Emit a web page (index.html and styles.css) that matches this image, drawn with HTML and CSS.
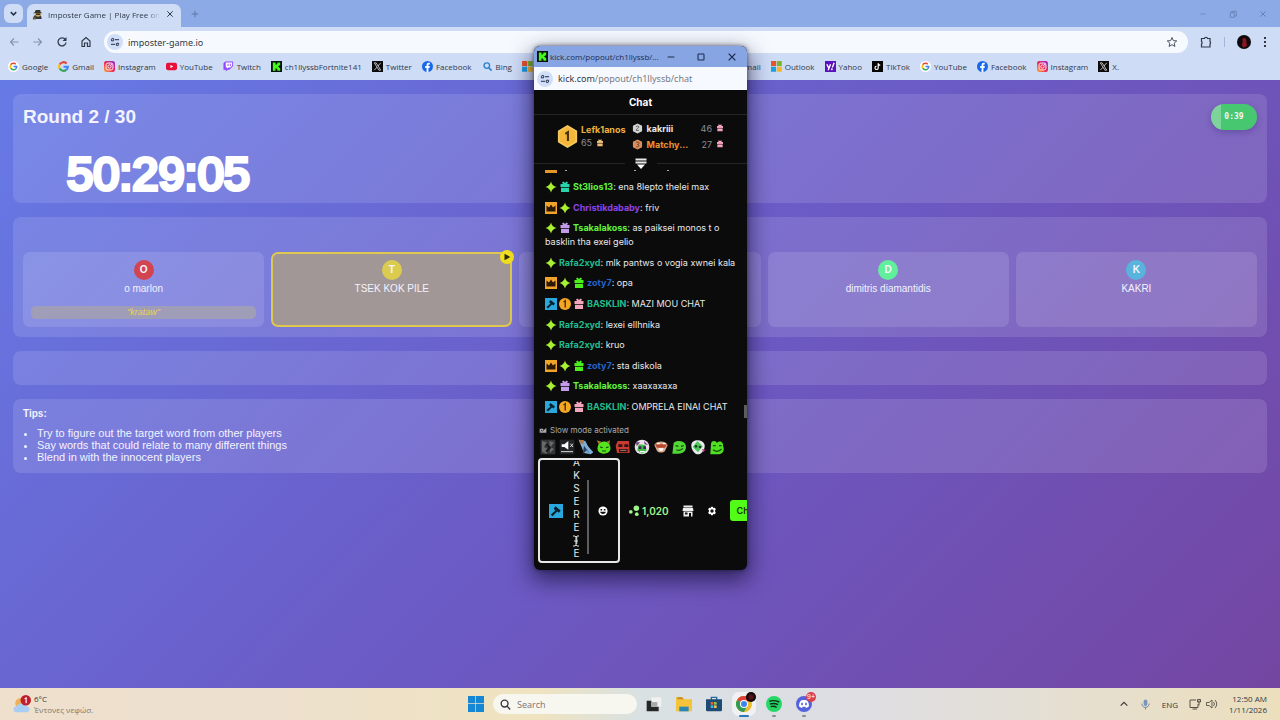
FILE: index.html
```
<!DOCTYPE html>
<html lang="en">
<head>
	<meta charset="utf-8">
	<title>Imposter Game | Play Free online</title>
	<link rel="stylesheet" href="styles.css">
</head>
<body>
	<svg class="defs" aria-hidden="true">
		<symbol id="google" viewBox="0 0 24 24"><circle cx="12" cy="12" r="12" fill="#fff"/><g fill="none" stroke-width="3.4"><path d="M17 7A7 7 0 0 0 6 8.400" stroke="#ea4335"/><path d="M6 8.400A7 7 0 0 0 6 15.600" stroke="#fbbc05"/><path d="M6 15.600A7 7 0 0 0 16.500 17.500" stroke="#34a853"/><path d="M12 12h7a7 7 0 0 1-2.500 5.500" stroke="#4285f4"/></g></symbol>
		<symbol id="gmail" viewBox="0 0 24 24"><g fill="none" stroke-width="4.6"><path d="M19 5.500A9.500 9.500 0 0 0 3.700 7.500" stroke="#ea4335"/><path d="M3.700 7.500a9.500 9.500 0 0 0 0 9" stroke="#fbbc05"/><path d="M3.700 16.500A9.500 9.500 0 0 0 18 19.500" stroke="#34a853"/><path d="M12 12.500h9.500a9.500 9.500 0 0 1-3.500 7" stroke="#4285f4"/></g></symbol>
		<symbol id="instagram" viewBox="0 0 24 24"><rect width="24" height="24" rx="5" fill="url(#insta)"/><g fill="none" stroke="#fff" stroke-width="2"><rect x="4.500" y="4.500" width="15" height="15" rx="4"/><circle cx="12" cy="12" r="3.600"/></g><circle cx="16.500" cy="7.500" r="1.200" fill="#fff"/></symbol>
		<linearGradient id="insta" x1="0" y1="1" x2="1" y2="0"><stop offset="0" stop-color="#fdb13c"/><stop offset=".45" stop-color="#f0284e"/><stop offset="1" stop-color="#9327e0"/></linearGradient>
		<symbol id="youtube" viewBox="0 0 24 24"><rect x="0" y="4" width="24" height="16" rx="4" fill="#e8103a"/><path d="M9.500 8.500v7l6.500-3.500z" fill="#fff"/></symbol>
		<symbol id="twitch" viewBox="0 0 24 24"><path d="M5 1 1 5v14h5v4l4-4h4l8-8V1z" fill="#9146ff"/><path d="M6 3h14v7l-4 4h-4l-3 3v-3H6z" fill="#fff"/><path d="M11 6v5M16 6v5" stroke="#9146ff" stroke-width="2"/></symbol>
		<symbol id="kick" viewBox="0 0 24 24"><rect width="24" height="24" fill="#06130a"/><path d="M4 3h6v5h2V6h2V3h6v6h-2v2h-2v2h2v2h2v6h-6v-3h-2v-2h-2v5H4z" fill="#42f81c"/></symbol>
		<symbol id="x" viewBox="0 0 24 24"><rect width="24" height="24" fill="#0b0b0d"/><path d="M5 4h4l10 16h-4zM19 4l-6 7M11 13.500 5 20" fill="none" stroke="#d8d8d8" stroke-width="1.800"/></symbol>
		<symbol id="facebook" viewBox="0 0 24 24"><circle cx="12" cy="12" r="12" fill="#1769e8"/><path d="M10 24v-9H7v-4h3V9c0-3.500 2-5 4.500-5H17v3.500h-1.500C14 7.500 14 8.300 14 9.200V11h3l-.5 4H14v9z" fill="#fff"/></symbol>
		<symbol id="bing" viewBox="0 0 24 24"><circle cx="10.500" cy="10" r="6" fill="none" stroke="#2b83cf" stroke-width="3"/><path d="m15 15 6 6" stroke="#2b83cf" stroke-width="3.500"/></symbol>
		<symbol id="microsoft" viewBox="0 0 24 24"><path fill="#e8542f" d="M0 0h11v11H0z"/><path fill="#7db32b" d="M12.500 0h11v11h-11z"/><path fill="#1d9fe0" d="M0 12.500h11v11H0z"/><path fill="#f5b52a" d="M12.500 12.500h11v11h-11z"/></symbol>
		<symbol id="yahoo" viewBox="0 0 24 24"><rect width="24" height="24" fill="#5b11bd"/><path d="m4 7 4 8M12 7 7 20M16 14l4-10" stroke="#fff" stroke-width="3"/><circle cx="15" cy="18" r="2" fill="#fff"/></symbol>
		<symbol id="tiktok" viewBox="0 0 24 24"><rect width="24" height="24" fill="#050505"/><path d="M13.500 5v10a3.500 3.500 0 1 1-3.500-3.500M13.500 5c.5 3 2 4 4.500 4.200" fill="none" stroke="#fff" stroke-width="2.600"/></symbol>
		<symbol id="tune" viewBox="0 0 24 24"><g fill="none" stroke="#44526d" stroke-width="3"><circle cx="6" cy="6.500" r="3"/><path d="M12 6.500h10M2 17.500h10"/><circle cx="18" cy="17.500" r="3"/></g></symbol>
		<symbol id="close" viewBox="0 0 12 12"><path d="m2 2 8 8M10 2l-8 8" fill="none" stroke="currentColor" stroke-width="1.500"/></symbol>
		<symbol id="star" viewBox="0 0 24 24"><path d="M12 1c1.500 7 5 9.500 11 11-6 1.500-9.500 5-11 11-1.500-6-5-9.500-11-11C7 10.500 10.500 7 12 1z" fill="#a8f032"/><path d="m12 5 7 7-7 7-7-7z" fill="#a8f032"/></symbol>
		<symbol id="gift" viewBox="0 0 24 24"><path d="M3 6h5L6 3l3-2 3 3 3-3 3 2-2 3h5v6H3zM4 13h16v9H4z" fill="currentColor"/><path d="M4 13h16" stroke="#0b0b0c" stroke-width="1"/></symbol>
		<symbol id="crown" viewBox="0 0 24 24"><rect width="24" height="24" fill="#f2a42a"/><path d="m3 7 5 4 4-6 4 6 5-4v12H3z" fill="#2b1804"/></symbol>
		<symbol id="hammer" viewBox="0 0 24 24"><rect width="24" height="24" fill="#2aa7dc"/><path d="m11 4 9 7-3 4-3-2-8 8-3-3 8-7-3-3z" fill="#08202e"/></symbol>
		<symbol id="coin" viewBox="0 0 24 24"><circle cx="12" cy="12" r="12" fill="#f3a724"/><path d="m9 8 3.500-2.500V19" fill="none" stroke="#5b3505" stroke-width="3"/></symbol>
	</svg>

	<header class="browser">
		<div class="tabstrip">
			<button class="tab-search" aria-label="Search tabs"><svg viewBox="0 0 12 12"><path d="m3 4.500 3 3 3-3" fill="none" stroke="#26324a" stroke-width="1.600"/></svg></button>
			<div class="tab">
				<svg class="favicon" viewBox="0 0 24 24"><path d="M3 22c0-7 3-10 9-10s9 3 9 10z" fill="#30363b"/><circle cx="13" cy="11" r="6" fill="#d5a64a"/><path d="M2 9h21l-4-2-1-5H8L6 7z" fill="#343427"/><path d="M9 10h9v3H9z" fill="#262b2e"/><path d="M2 17h6v6H2z" fill="#795e30"/></svg>
				<span class="tab-title">Imposter Game | Play Free onlin</span>
				<button class="plain" aria-label="Close tab"><svg class="i8"><use href="#close"/></svg></button>
			</div>
			<button class="plain new-tab" aria-label="New tab"><svg class="i8" viewBox="0 0 12 12"><path d="M6 1v10M1 6h10" stroke="#58719f" stroke-width="1.300"/></svg></button>
			<div class="window-buttons">
				<button class="plain" aria-label="Minimize"><svg class="i8" viewBox="0 0 12 12"><path d="M2 6h8" stroke="currentColor"/></svg></button>
				<button class="plain" aria-label="Restore"><svg class="i8" viewBox="0 0 12 12"><path d="M2 4h6v7H2zM4 4V2h7v7H8" fill="none" stroke="currentColor" stroke-width="1.300"/></svg></button>
				<button class="plain" aria-label="Close"><svg class="i8"><use href="#close"/></svg></button>
			</div>
		</div>
		<div class="toolbar">
			<div class="nav-buttons">
				<button class="plain faded" aria-label="Back"><svg viewBox="0 0 24 24"><path d="M21 12H5m7-7-7 7 7 7" fill="none" stroke="currentColor" stroke-width="2.200"/></svg></button>
				<button class="plain faded" aria-label="Forward"><svg viewBox="0 0 24 24"><path d="M3 12h16m-7-7 7 7-7 7" fill="none" stroke="currentColor" stroke-width="2.200"/></svg></button>
				<button class="plain" aria-label="Reload"><svg viewBox="0 0 24 24"><path d="M18.500 7a8 8 0 1 0 1.500 6" fill="none" stroke="currentColor" stroke-width="2.600"/><path d="M21 2v8h-8z" fill="currentColor"/></svg></button>
				<button class="plain" aria-label="Home"><svg viewBox="0 0 24 24"><path d="M4 10v11h5v-7h6v7h5V10l-8-7z" fill="none" stroke="currentColor" stroke-width="2.400"/></svg></button>
			</div>
			<div class="omnibox">
				<svg class="site-info"><use href="#tune"/></svg>
				<input class="address" type="text" aria-label="Address" value="imposter-game.io">
				<button class="plain" aria-label="Bookmark"><svg viewBox="0 0 24 24"><path d="m12 3 2.700 6.200 6.800.6-5.100 4.500 1.500 6.600-5.900-3.500-5.900 3.500 1.500-6.600-5.100-4.500 6.800-.6z" fill="none" stroke="#4b5360" stroke-width="2"/></svg></button>
			</div>
			<div class="tools">
				<button class="plain" aria-label="Extensions"><svg viewBox="0 0 24 24"><path d="M3 5h6a3 2.500 0 0 1 6 0h5v6a2.500 3 0 0 1 0 5v6H3v-6a3 3 0 0 0 0-5z" fill="none" stroke="currentColor" stroke-width="2.400"/></svg></button>
				<span class="divider"></span>
				<button class="plain" aria-label="Profile"><svg class="i14" viewBox="0 0 24 24"><circle cx="12" cy="12" r="12" fill="#0e090d"/><path d="M9 7c3-4 8-1 7 4l1 8-6 3-3-5 2-5z" fill="#8c1520"/></svg></button>
				<button class="plain" aria-label="Menu"><svg class="dots" viewBox="0 0 4 12"><circle cx="2" cy="2" r="1"/><circle cx="2" cy="6" r="1"/><circle cx="2" cy="10" r="1"/></svg></button>
			</div>
		</div>
		<nav class="bookmarks">
			<div class="bookmark-group">
				<a href="#"><svg><use href="#google"/></svg>Google</a>
				<a href="#"><svg><use href="#gmail"/></svg>Gmail</a>
				<a href="#"><svg><use href="#instagram"/></svg>Instagram</a>
				<a href="#"><svg><use href="#youtube"/></svg>YouTube</a>
				<a href="#"><svg><use href="#twitch"/></svg>Twitch</a>
				<a href="#"><svg><use href="#kick"/></svg>ch1llyssbFortnite141</a>
				<a href="#"><svg><use href="#x"/></svg>Twitter</a>
				<a href="#"><svg><use href="#facebook"/></svg>Facebook</a>
				<a href="#"><svg><use href="#bing"/></svg>Bing</a>
				<a href="#" aria-label="Microsoft"><svg><use href="#microsoft"/></svg></a>
			</div>
			<div class="bookmark-group">
				<a href="#">Gmail</a>
				<a href="#"><svg><use href="#microsoft"/></svg>Outlook</a>
				<a href="#"><svg><use href="#yahoo"/></svg>Yahoo</a>
				<a href="#"><svg><use href="#tiktok"/></svg>TikTok</a>
				<a href="#"><svg><use href="#google"/></svg>YouTube</a>
				<a href="#"><svg><use href="#facebook"/></svg>Facebook</a>
				<a href="#"><svg><use href="#instagram"/></svg>Instagram</a>
				<a href="#"><svg><use href="#x"/></svg>X.</a>
			</div>
		</nav>
	</header>

	<main class="game">
		<section class="panel round">
			<div>
				<h1>Round 2 / 30</h1>
				<div class="stream-clock">50:29:05</div>
			</div>
			<div class="timer">0:39</div>
		</section>
		<section class="panel players">
			<article class="player">
				<span class="avatar red">O</span>
				<span>o marlon</span>
				<span class="word">"krataw"</span>
			</article>
			<article class="player current">
				<span class="avatar yellow">T</span>
				<span>TSEK KOK PILE</span>
				<span class="turn"><svg viewBox="0 0 12 12"><path d="m3 2 7 4-7 4z" fill="#29280c"/></svg></span>
			</article>
			<article class="player"></article>
			<article class="player">
				<span class="avatar green">D</span>
				<span>dimitris diamantidis</span>
			</article>
			<article class="player">
				<span class="avatar blue">K</span>
				<span>KAKRI</span>
			</article>
		</section>
		<section class="panel status"></section>
		<section class="panel tips">
			<h2>Tips:</h2>
			<ul>
				<li>Try to figure out the target word from other players</li>
				<li>Say words that could relate to many different things</li>
				<li>Blend in with the innocent players</li>
			</ul>
		</section>
	</main>

	<!-- chat popout -->
	<aside class="popout">
		<div class="popout-title">
			<svg class="i11"><use href="#kick"/></svg>
			<span class="popout-name">kick.com/popout/ch1llyssb/...</span>
			<button class="plain" aria-label="Minimize"><svg class="i8" viewBox="0 0 12 12"><path d="M1 6h10" stroke="currentColor" stroke-width="1.500"/></svg></button>
			<button class="plain" aria-label="Maximize"><svg class="i8" viewBox="0 0 12 12"><rect x="1.500" y="1.500" width="9" height="9" rx="1" fill="none" stroke="currentColor" stroke-width="1.600"/></svg></button>
			<button class="plain" aria-label="Close"><svg class="i10"><use href="#close"/></svg></button>
		</div>
		<div class="popout-address">
			<svg class="site-info"><use href="#tune"/></svg>
			<div><span class="host">kick.com</span>/popout/ch1llyssb/chat</div>
		</div>
		<h2 class="chat-title">Chat</h2>
		<div class="leaders">
			<div class="leader-first">
				<svg class="medal" viewBox="0 0 24 26"><path d="m12 1 10 6v12l-10 6-10-6V7z" fill="#f4b73a" stroke="#f6c75c" stroke-width="2" stroke-linejoin="round"/><path d="m9.500 10 3-2v10" fill="none" stroke="#4b3209" stroke-width="2.400"/></svg>
				<div>
					<b class="gold">Lefk1anos</b>
					<div class="count">65 <svg class="i8 tan"><use href="#gift"/></svg></div>
				</div>
			</div>
			<div class="leader-rest">
				<div class="leader"><svg class="i11" viewBox="0 0 24 24"><path d="m12 1 10 5v12l-10 5-10-5V6z" fill="#d2d3d5"/><path d="M9 9c0-3 6-3 6 0 0 2-6 3-6 7h6" fill="none" stroke="#555" stroke-width="2"/></svg><b>kakriii</b><span class="count">46</span><svg class="i8 pink"><use href="#gift"/></svg></div>
				<div class="leader"><svg class="i11" viewBox="0 0 24 24"><path d="m12 1 10 5v12l-10 5-10-5V6z" fill="#d98f5d"/><path d="M9 7h5c2 0 2 5-2 5 4 0 4 5 0 5H9" fill="none" stroke="#70391d" stroke-width="2"/></svg><b class="orange">Matchy...</b><span class="count">27</span><svg class="i8 pink"><use href="#gift"/></svg></div>
			</div>
		</div>
		<div class="collapse"><button class="plain" aria-label="Collapse"><svg class="i12" viewBox="0 0 24 24"><path d="M1 3h22M1 9h22" stroke="#e8e8e8" stroke-width="4"/><path d="M4 13h16l-8 9z" fill="#fff"/></svg></button></div>
		<div class="cut-row"><svg viewBox="0 0 130 3"><path d="M0 0h12v3H0z" fill="#e79628"/><path d="M20 0h2v1h-2zM89 0h2v1h-2zM122 0h2v1h-2z" fill="#aaa"/></svg></div>
		<div class="messages">
			<p><svg><use href="#star"/></svg><svg class="teal"><use href="#gift"/></svg><b class="n-green">St3lios13</b>: ena 8lepto thelei max</p>
			<p><svg><use href="#crown"/></svg><svg><use href="#star"/></svg><b class="n-purple">Christikdababy</b>: friv</p>
			<p><svg><use href="#star"/></svg><svg class="lilac"><use href="#gift"/></svg><b class="n-green">Tsakalakoss</b>: as paiksei monos t o basklin tha exei gelio</p>
			<p><svg><use href="#star"/></svg><b class="n-teal">Rafa2xyd</b>: mlk pantws o vogia xwnei kala</p>
			<p><svg><use href="#crown"/></svg><svg><use href="#star"/></svg><svg class="lime"><use href="#gift"/></svg><b class="n-blue">zoty7</b>: opa</p>
			<p><svg><use href="#hammer"/></svg><svg><use href="#coin"/></svg><svg class="pink"><use href="#gift"/></svg><b class="n-teal">BASKLIN</b>: MAZI MOU CHAT</p>
			<p><svg><use href="#star"/></svg><b class="n-teal">Rafa2xyd</b>: lexei ellhnika</p>
			<p><svg><use href="#star"/></svg><b class="n-teal">Rafa2xyd</b>: kruo</p>
			<p><svg><use href="#crown"/></svg><svg><use href="#star"/></svg><svg class="lime"><use href="#gift"/></svg><b class="n-blue">zoty7</b>: sta diskola</p>
			<p><svg><use href="#star"/></svg><svg class="lilac"><use href="#gift"/></svg><b class="n-green">Tsakalakoss</b>: xaaxaxaxa</p>
			<p><svg><use href="#hammer"/></svg><svg><use href="#coin"/></svg><svg class="pink"><use href="#gift"/></svg><b class="n-teal">BASKLIN</b>: OMPRELA EINAI CHAT</p>
			<span class="scroll-thumb"></span>
		</div>
		<div class="slow-mode"><svg class="i8" viewBox="0 0 12 12"><path d="M1 4h5l1 2 4-3v7H1z" fill="#aaa"/><path d="m3 6 2 2 3-3" fill="none" stroke="#222" stroke-width="1.200"/></svg>Slow mode activated</div>
		<div class="emotes">
			<svg viewBox="0 0 24 24"><path d="M1 1h22v22H1z" fill="#343536"/><path d="m3 3 7 2-4 7 6 3-2 7-7-3zM14 3l7 2-5 7 5 3-6 6" fill="#67696a"/><path d="m10 8 5 5-6 6" stroke="#151617" stroke-width="3" fill="none"/></svg>
			<svg viewBox="0 0 24 24"><path d="M1 1h22v22H1z" fill="#222324"/><path d="M4 8h4l6-5v13l-6-4H4z" fill="#fff"/><path d="m17 7 4 5m0-5-4 5M3 19h18" stroke="#ddd" stroke-width="1.500"/></svg>
			<svg viewBox="0 0 24 24"><path d="m1 1 10 2 4 8 8 9-4 3-10-2z" fill="#7faed5"/><path d="m1 1 8 1-1 6-5-2z" fill="#a57b51"/><path d="m9 10-2 13 6-6 5 5" fill="#283e61"/></svg>
			<svg viewBox="0 0 24 24"><path d="M4 8C6 3 18 2 20 8c4 7 1 14-8 14S0 16 4 8z" fill="#55e51f"/><path d="m1 2 7 2-4 4zm20 0-5 2 4 4z" fill="#a8772c"/><path d="m6 12 4 1m5 0 4-1M9 18h6" stroke="#174a08" stroke-width="1.800"/></svg>
			<svg viewBox="0 0 24 24"><path d="M4 3h17l1 18H3L1 10z" fill="#c93a32"/><path d="M5 8h6v4H5zm9 0h6v4h-6zM6 15h13v5H6z" fill="#2b1414"/><path d="M8 17h9" stroke="#e6b7a8"/></svg>
			<svg viewBox="0 0 24 24"><circle cx="12" cy="12" r="11" fill="#e8dfe8"/><path d="M3 5h6L4 11zm12-2 6 6-5-1z" fill="#6e3b79"/><path d="m7 8 10 1 2 8-7 5-7-5z" fill="#43bd4a"/><path d="M7 11h4v4H7zm7 0h4v4h-4z" fill="#451e60"/><path d="M9 19h7" stroke="#fff" stroke-width="2"/></svg>
			<svg viewBox="0 0 24 24"><path d="M2 9C5 2 19 2 22 9l-4 9c-3 3-9 3-12 0z" fill="#d8a888"/><path d="M3 8h18l-3 5H6z" fill="#b8452e"/><path d="M8 14h8l-2 4h-4z" fill="#fff"/><path d="M6 7h4m5 0h4" stroke="#fff" stroke-width="2"/></svg>
			<svg viewBox="0 0 24 24"><path d="M4 6c5-5 16-3 18 3 2 8-3 13-11 13H2l1-8z" fill="#4fd735"/><path d="m7 10 4 1m4 0 4-1M8 16c4 2 7 1 10-2" fill="none" stroke="#174a0b" stroke-width="1.700"/></svg>
			<svg viewBox="0 0 24 24"><path d="M12 2c6 0 11 5 10 10s-5 11-10 11S2 16 2 10s4-8 10-8z" fill="#e6eae9"/><path d="m11 3 8 8-7 9-8-8z" fill="#4cc65a"/><circle cx="9" cy="11" r="2" fill="#173f26"/><circle cx="15" cy="12" r="2" fill="#173f26"/><path d="m18 15 5 1-3 4z" fill="#e12b9c"/></svg>
			<svg viewBox="0 0 24 24"><path d="M3 8c0-7 8-6 9-2 4-5 10-1 9 4 3 7 0 13-9 13H2z" fill="#4ee021"/><path d="M6 10h4m5 0h4M6 16c5 4 9 3 13-1" fill="none" stroke="#174a0b" stroke-width="1.800"/></svg>
		</div>
		<div class="composer">
			<div class="message-box">
				<svg class="i14"><use href="#hammer"/></svg>
				<div class="message-clip">
					<textarea aria-label="Message">A
K
S
E
R
E
I
E</textarea>
					<svg class="text-cursor" viewBox="0 0 8 12"><path d="M1 1h2l1 1 1-1h2M4 2v8M1 11h2l1-1 1 1h2M2 6h4" fill="none" stroke="#ddd"/></svg>
				</div>
				<span class="box-scroll"></span>
				<button class="plain" aria-label="Emotes"><svg class="i10" viewBox="0 0 24 24"><circle cx="12" cy="12" r="11" fill="#fff"/><path d="M6 7h4v4H6zm8 0h4v4h-4zM5 14h14c-2 7-12 7-14 0z" fill="#111"/></svg></button>
			</div>
			<div class="points"><svg class="i11" viewBox="0 0 24 24"><circle cx="4" cy="15" r="4"/><circle cx="16" cy="7" r="6"/><circle cx="17" cy="20" r="4"/></svg>1,020</div>
			<button class="plain" aria-label="Store"><svg class="i12" viewBox="0 0 24 24"><path d="M3 1h18v4H3zM2 6h20l1 6H1zM3 13h18v10h-3v-7h-4v7H3z" fill="#eee"/><path d="M6 15h5v4H6z" fill="#111"/></svg></button>
			<button class="plain" aria-label="Settings"><svg class="i10" viewBox="0 0 24 24"><path d="M10 2h4l1 3 4-1 2 4-2 4 2 4-2 4-4-1-1 3h-4l-1-3-4 1-2-4 2-4-2-4 2-4 4 1z" fill="#fff"/><circle cx="12" cy="12" r="4" fill="#111"/></svg></button>
			<button class="send">Chat</button>
		</div>
	</aside>

	<footer class="taskbar">
		<div class="weather">
			<svg class="weather-icon" viewBox="0 0 24 24"><circle cx="10" cy="11" r="7" fill="#edb157"/><path d="M5 23c-6 0-6-8 0-8 2-5 10-5 12 0 7 0 7 8 0 8z" fill="#a9cdf4"/><circle cx="17" cy="7" r="7" fill="#bf1f2d"/><path d="m15.500 5 2-1v7" fill="none" stroke="#fff" stroke-width="1.500"/></svg>
			<div>6°C<br><span class="muted">Έντονες νεφώσ.</span></div>
		</div>
		<div class="apps">
			<button class="plain" aria-label="Start"><svg class="i16" viewBox="0 0 24 24"><path d="M0 0h11v11H0zm12 0h12v11H12zM0 12h11v12H0zm12 0h12v12H12z" fill="#1687d5"/></svg></button>
			<label class="search"><svg class="i11" viewBox="0 0 24 24"><circle cx="10" cy="10" r="7.500" fill="none" stroke="#31363d" stroke-width="3"/><path d="m15 15 7 8" stroke="#31363d" stroke-width="3"/></svg><input type="text" aria-label="Search" placeholder="Search"></label>
			<button class="plain" aria-label="Task view"><svg class="i16" viewBox="0 0 24 24"><path d="M8 2h15v14H8z" fill="#f1f1f1"/><path d="M1 7h7v9h11v7H1z" fill="#252628"/><path d="M8 9h9v7H8z" fill="#aaa"/></svg></button>
			<button class="plain" aria-label="Files"><svg class="i16" viewBox="0 0 24 24"><path d="M0 2h9l3 3h12v18H0z" fill="#f4c33a"/><path d="M2 2h7l3 3H2z" fill="#c58b20"/><path d="M5 16h14v7H5z" fill="#2a86b4"/></svg></button>
			<button class="plain" aria-label="Store"><svg class="i16" viewBox="0 0 24 24"><path d="M8 6V2h8v4" fill="none" stroke="#256b9c" stroke-width="2"/><path d="M0 5h24v16q0 2-2 2H2q-2 0-2-2z" fill="#1e4b73"/><path fill="#e7603c" d="M7 9h4v4H7z"/><path fill="#8bc643" d="M12 9h4v4h-4z"/><path fill="#3fb1ef" d="M7 14h4v4H7z"/><path fill="#f5c244" d="M12 14h4v4h-4z"/></svg></button>
			<button class="plain app open" aria-label="Chrome"><svg class="i16" viewBox="0 0 24 24"><circle cx="12" cy="12" r="12" fill="#eabb2e"/><path d="M12 12 1.600 6A12 12 0 0 1 22.400 6z" fill="#dc4437"/><path d="M12 12 1.600 6A12 12 0 0 0 12 24l4-8z" fill="#2f9b54"/><circle cx="12" cy="12" r="6" fill="#fff"/><circle cx="12" cy="12" r="4.500" fill="#3f83ec"/></svg><span class="profile-badge"></span></button>
			<button class="plain app" aria-label="Spotify"><svg class="i16" viewBox="0 0 24 24"><circle cx="12" cy="12" r="12" fill="#27d765"/><path d="M5 8c5-2 10-1 15 1M6 12c4-1 8-1 12 1M7 16c3-1 6-1 9 1" fill="none" stroke="#102c19" stroke-width="2.200"/></svg></button>
			<button class="plain app" aria-label="Discord"><svg class="i16" viewBox="0 0 24 24"><circle cx="12" cy="12" r="12" fill="#5662dd"/><path d="m7 7 3-1h4l3 1c2 3 3 6 2 9l-4 2-1-2h-4l-1 2-4-2c-1-3 0-6 2-9z" fill="#fff"/><path d="M9 10v4m6-4v4" stroke="#5662dd" stroke-width="2.400"/></svg><span class="count-badge">9+</span></button>
		</div>
		<div class="tray">
			<svg class="i10" viewBox="0 0 12 12"><path d="m2 8 4-4 4 4" fill="none" stroke="#3c3a34" stroke-width="1.400"/></svg>
			<svg class="i11" viewBox="0 0 24 24"><rect x="8" y="1" width="8" height="14" rx="4" fill="#7896bd"/><path d="M4 10c0 11 16 11 16 0M12 18v5" fill="none" stroke="#68809f" stroke-width="2"/></svg>
			<span>ENG</span>
			<div class="tray-pair">
				<svg class="i12" viewBox="0 0 24 24"><path d="M14 4H2v15h16v-7M7 22h9M20 5v10m-3-12h6v5h-6z" fill="none" stroke="#56524a" stroke-width="2"/></svg>
				<svg class="i12" viewBox="0 0 24 24"><path d="M1 9h5l6-5v16l-6-5H1zM15 8q4 4 0 8m3-12q7 8 0 16" fill="none" stroke="#56524a" stroke-width="1.800"/></svg>
			</div>
			<div class="datetime">12:50 AM<br>1/11/2026</div>
		</div>
	</footer>
</body>
</html>
```
FILE: styles.css
```
*{
	box-sizing: border-box;
}
body{
	display: flex;
	flex-direction: column;
	min-height: 100vh;
	margin: 0;
	overflow: hidden;
	font-family: "Open Sans", "Noto Sans", sans-serif;
	font-size: 8px;
	color: #303947;
}
svg{
	display: block;
	flex: none;
}
a{
	color: inherit;
	text-decoration: none;
}
h1, h2, p, ul{
	margin: 0;
}
input, textarea{
	border: 0;
	padding: 0;
	outline: 0;
	background: none;
	font: inherit;
	color: inherit;
}
.defs{
	position: absolute;
	width: 0;
	height: 0;
}
.plain{
	display: flex;
	padding: 0;
	border: 0;
	background: none;
	color: inherit;
}
.i8{ width: 8px; height: 8px; }
.i10{ width: 10px; height: 10px; }
.i11{ width: 11px; height: 11px; }
.i12{ width: 12px; height: 12px; }
.i14{ width: 14px; height: 14px; }
.i16{ width: 16px; height: 16px; }

/* browser */
.browser{
	background: #cfdcf6;
}
.tabstrip{
	display: flex;
	align-items: center;
	height: 27px;
	padding: 0 13px 0 4px;
	background: #8cabe6;
}
.tab-search{
	width: 19px;
	height: 19px;
	padding: 4px;
	border: 0;
	border-radius: 6px;
	background: #cfdcf6;
}
.tab{
	display: flex;
	align-items: center;
	align-self: flex-end;
	width: 154px;
	height: 23px;
	margin-left: 4px;
	padding: 0 7px 3px 5px;
	border-radius: 7px 7px 0 0;
	background: #cfdcf6;
}
.favicon{
	width: 11px;
	height: 11px;
	margin-right: 5px;
}
.tab-title{
	flex: 1;
	overflow: hidden;
	margin-right: 6px;
	white-space: nowrap;
	-webkit-mask-image: linear-gradient(90deg, #000 88%, transparent);
}
.new-tab{
	margin-left: 10px;
}
.window-buttons{
	display: flex;
	gap: 22px;
	margin-left: auto;
	color: #6682b5;
}
.toolbar{
	display: flex;
	align-items: center;
	height: 30px;
	padding: 0 13px 0 8px;
}
.toolbar svg{
	width: 12px;
	height: 12px;
}
.nav-buttons{
	display: flex;
	gap: 12px;
	margin-right: 12px;
}
.faded{
	color: #8291ae;
}
.omnibox{
	display: flex;
	flex: 1;
	align-items: center;
	height: 22px;
	padding: 0 10px 0 3px;
	border-radius: 11px;
	background: #f6faff;
	font-family: "Noto Sans", sans-serif;
	font-size: 9px;
}
.toolbar .site-info, .site-info{
	width: 16px;
	height: 16px;
	padding: 3px;
	border-radius: 8px;
	background: #d0def8;
}
.address{
	flex: 1;
	margin-left: 5px;
}
.tools{
	display: flex;
	align-items: center;
	gap: 12px;
	margin-left: 12px;
}
.toolbar .i14{
	width: 14px;
	height: 14px;
}
.toolbar .dots{
	width: 4px;
}
.divider{
	width: 1px;
	height: 10px;
	background: #a5b7d9;
}
.bookmarks{
	display: flex;
	justify-content: space-between;
	height: 23px;
	padding: 0 161px 5px 8px;
}
.bookmark-group{
	display: flex;
	align-items: center;
	gap: 10px;
}
.bookmark-group a{
	display: flex;
	align-items: center;
	gap: 3px;
}
.bookmark-group svg{
	width: 11px;
	height: 11px;
}

/* game page */
.game{
	display: flex;
	flex: 1;
	flex-direction: column;
	gap: 14px;
	padding: 14px 13px;
	background: linear-gradient(135deg, #667ae6, #6b5bc6 50%, #7446a2);
	font-family: "Liberation Sans", Arial, sans-serif;
	color: #f3f3ff;
}
.panel{
	border-radius: 8px;
	background: rgba(255, 255, 255, .12);
}
.round{
	display: flex;
	justify-content: space-between;
	align-items: flex-start;
	height: 109px;
	padding: 10px 10px 0 10px;
}
.round h1{
	font-size: 19px;
	line-height: 26px;
}
.stream-clock{
	margin: 18px 0 0 44px;
	font-size: 47px;
	line-height: 52px;
	color: #fff;
	-webkit-text-stroke: 4px #fff;
}
.timer{
	width: 46px;
	height: 26px;
	border-radius: 13px;
	background: linear-gradient(90deg, #7dd49a 10px, #47c870 10px);
	box-shadow: 0 2px 6px rgba(40, 20, 90, .3);
	font: bold 8px "DejaVu Sans Mono", monospace;
	line-height: 26px;
	text-align: center;
}
.players{
	display: grid;
	grid-template-columns: repeat(5, 1fr);
	gap: 7px;
	padding: 35px 10px 10px;
}
.player{
	position: relative;
	display: flex;
	flex-direction: column;
	align-items: center;
	height: 75px;
	padding: 8px;
	border-radius: 7px;
	background: rgba(255, 255, 255, .12);
	font-size: 10px;
	line-height: 17px;
}
.current{
	padding: 6px;
	border: 2px solid #dfc84f;
	background: #a29797;
}
.avatar{
	width: 20px;
	height: 20px;
	border-radius: 50%;
	font-weight: bold;
	line-height: 20px;
	text-align: center;
}
.red{ background: #d2444f; }
.yellow{ background: #dbcb4f; }
.green{ background: #62ef9b; }
.blue{ background: #58b4dc; }
.word{
	align-self: stretch;
	margin-top: auto;
	border-radius: 5px;
	background: #a09db8;
	font-size: 9px;
	font-style: italic;
	line-height: 13px;
	text-align: center;
	color: #e8d645;
}
.turn{
	position: absolute;
	top: -4px;
	right: -4px;
	width: 14px;
	height: 14px;
	padding: 2px;
	border-radius: 50%;
	background: #f1df1f;
}
.status{
	height: 34px;
}
.tips{
	padding: 8px 10px;
	font-size: 11px;
	line-height: 12px;
}
.tips h2{
	margin-bottom: 6px;
	font-size: 10px;
	line-height: 14px;
}
.tips ul{
	padding: 0 0 2px 14px;
}

/* chat popout */
.popout{
	position: absolute;
	top: 46px;
	left: 534px;
	display: flex;
	flex-direction: column;
	width: 213px;
	height: 524px;
	overflow: hidden;
	border-radius: 6px;
	background: #0b0b0c;
	box-shadow: 0 8px 22px 2px rgba(15, 10, 45, .65), 0 0 4px rgba(20, 20, 50, .6);
	font-family: Inter, sans-serif;
	font-size: 9px;
	color: #e9e9ea;
}
.popout-title, .popout-address{
	display: flex;
	align-items: center;
	flex: none;
}
.popout-title{
	gap: 22px;
	height: 21px;
	padding: 0 10px 0 3px;
	background: #86a5e2;
	font-family: "Open Sans", sans-serif;
	font-size: 8px;
	color: #1c2c50;
}
.popout-name{
	flex: 1;
	min-width: 0;
	margin-left: -20px;
	white-space: nowrap;
}
.popout-address{
	gap: 5px;
	height: 23px;
	padding: 0 3px;
	background: #f6f9ff;
	font-family: "Noto Sans", sans-serif;
	color: #76797f;
}
.host{
	color: #33373d;
}
.chat-title{
	flex: none;
	height: 25px;
	border-bottom: 1px solid #242528;
	font-size: 10px;
	line-height: 24px;
	text-align: center;
	color: #fff;
}
.leaders{
	display: flex;
	flex: none;
	gap: 6px;
	height: 42px;
	padding: 0 23px 0 23px;
	align-items: center;
}
.leader-first{
	display: flex;
	align-items: center;
	gap: 3px;
	line-height: 13px;
}
.medal{
	width: 21px;
	height: 23px;
}
.leader-rest{
	flex: 1;
}
.leader{
	display: flex;
	align-items: center;
	gap: 4px;
	height: 16px;
}
.leader b{
	flex: 1;
}
.count{
	display: flex;
	align-items: center;
	gap: 4px;
	color: #8c8d91;
}
.gold{ color: #eeb23d; }
.orange{ color: #ee9234; }
.tan{ color: #edbd78; }
.pink{ color: #f3a5bd; }
.teal{ color: #28d5aa; }
.lilac{ color: #c49bea; }
.lime{ color: #4bf01c; }
.collapse{
	display: flex;
	flex: none;
	align-items: center;
	gap: 10px;
	height: 13px;
}
.collapse::before, .collapse::after{
	content: "";
	flex: 1;
	height: 1px;
	background: #242528;
}
.cut-row{
	flex: none;
	padding: 0 11px;
}
.cut-row svg{
	width: 130px;
	height: 3px;
}
.messages{
	position: relative;
	display: flex;
	flex: none;
	flex-direction: column;
	justify-content: space-between;
	height: 234px;
	margin-top: 7px;
	padding: 0 8px 0 11px;
	line-height: 14px;
}
.messages p svg{
	display: inline-block;
	width: 12px;
	height: 12px;
	margin-right: 2px;
	vertical-align: -3px;
}
.n-green{ color: #62f53c; }
.n-purple{ color: #8d43e6; }
.n-teal{ color: #20bd8c; }
.n-blue{ color: #2463c7; }
.scroll-thumb{
	position: absolute;
	right: 0;
	bottom: -4px;
	width: 3px;
	height: 13px;
	background: #5b5c5f;
}
.slow-mode{
	display: flex;
	flex: none;
	align-items: center;
	gap: 3px;
	height: 14px;
	margin-top: 9px;
	padding: 0 5px;
	font-size: 8px;
	color: #aaabad;
}
.emotes{
	display: flex;
	flex: none;
	justify-content: space-between;
	margin: 2px 22px 3px 6px;
}
.emotes svg{
	width: 16px;
	height: 16px;
}
.composer{
	display: flex;
	flex: none;
	align-items: center;
	gap: 13px;
	padding-left: 4px;
}
.message-box{
	display: flex;
	flex: none;
	align-items: center;
	gap: 9px;
	width: 82px;
	height: 105px;
	padding: 0 0 0 9px;
	border: 2px solid #e8e8e8;
	border-radius: 4px;
}
.message-clip{
	position: relative;
	display: flex;
	align-items: flex-end;
	width: 9px;
	height: 99px;
	overflow: hidden;
}
.message-clip textarea{
	flex: none;
	width: 9px;
	height: 104px;
	overflow: hidden;
	resize: none;
	font-size: 10px;
	line-height: 13px;
	text-align: center;
}
.text-cursor{
	position: absolute;
	bottom: 13px;
	left: 0;
	width: 8px;
	height: 12px;
}
.box-scroll{
	width: 2px;
	height: 74px;
	margin: 13px 0 0 -3px;
	background: #5d5d60;
}
.points{
	display: flex;
	align-items: center;
	gap: 2px;
	margin-left: -4px;
	font-size: 10px;
	font-weight: 600;
	color: #9ff58a;
	fill: #9ff58a;
}
.send{
	flex: none;
	height: 21px;
	padding: 0 7px;
	border: 0;
	border-radius: 3px;
	background: #53fc18;
	font: 600 9px Inter, sans-serif;
	color: #12310a;
}

/* taskbar */
.taskbar{
	display: grid;
	grid-template-columns: 1fr auto 1fr;
	align-items: center;
	height: 32px;
	padding: 0 13px;
	background: linear-gradient(90deg, #eee0cc, #eee0cf 20%, #efe3bf 42%, #d9e1e3 50%, #dddde4 65%, #e4dfd6 80%, #ecdfbc);
	line-height: 11px;
}
.weather{
	display: flex;
	align-items: center;
	gap: 3px;
}
.weather-icon{
	width: 18px;
	height: 18px;
}
.muted{
	color: #80786e;
}
.apps{
	display: flex;
	align-items: center;
	gap: 14px;
}
.search{
	display: flex;
	align-items: center;
	gap: 6px;
	width: 144px;
	height: 20px;
	margin: 0 -5px;
	padding: 0 7px;
	border-radius: 10px;
	background: #f8f7ef;
	font-size: 9px;
}
.search input{
	width: 100%;
}
.app{
	position: relative;
}
.app::after{
	content: "";
	position: absolute;
	bottom: -5px;
	left: 6px;
	width: 4px;
	height: 2px;
	border-radius: 1px;
	background: #888b90;
}
.open{
	border-radius: 3px;
	background: #f1f1f4;
	box-shadow: 0 0 0 4px #f1f1f4;
}
.open::after{
	left: 3px;
	width: 10px;
	background: #2879bd;
}
.profile-badge, .count-badge{
	position: absolute;
	top: -4px;
	right: -4px;
	width: 10px;
	height: 10px;
	border-radius: 5px;
}
.profile-badge{
	background: radial-gradient(#5c121a 20%, #080607 60%);
}
.count-badge{
	background: #dc3f4b;
	font-size: 7px;
	line-height: 10px;
	color: #fff;
}
.tray{
	display: flex;
	align-items: center;
	justify-content: flex-end;
	gap: 11px;
}
.tray-pair{
	display: flex;
	gap: 5px;
}
.datetime{
	text-align: right;
}
```
